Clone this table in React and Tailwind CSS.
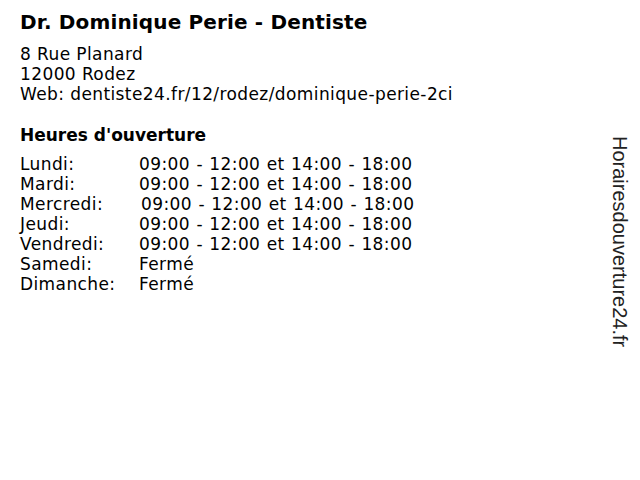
import React from 'react';

const hours = [
  { day: 'Lundi:', time: '09:00 - 12:00 et 14:00 - 18:00' },
  { day: 'Mardi:', time: '09:00 - 12:00 et 14:00 - 18:00' },
  { day: 'Mercredi:', time: '09:00 - 12:00 et 14:00 - 18:00', shift: true },
  { day: 'Jeudi:', time: '09:00 - 12:00 et 14:00 - 18:00' },
  { day: 'Vendredi:', time: '09:00 - 12:00 et 14:00 - 18:00' },
  { day: 'Samedi:', time: 'Fermé' },
  { day: 'Dimanche:', time: 'Fermé' },
];

const App = () => {
  return (
    <div className="w-[640px] h-[480px] bg-white text-black flex font-['DejaVu_Sans',sans-serif] overflow-hidden">
      {/* Main info */}
      <div className="flex-grow pl-[20px] pt-[10px]">
        <h1 className="text-[20px] leading-[24px] font-bold tracking-[0.15px]">Dr. Dominique Perie - Dentiste</h1>

        <div className="mt-[10px] text-[17px] leading-[20px] tracking-[0.4px]">
          <p>8 Rue Planard</p>
          <p>12000 Rodez</p>
          <p>Web: dentiste24.fr/12/rodez/dominique-perie-2ci</p>
        </div>

        <h2 className="mt-[21px] text-[17px] leading-[20px] font-bold">Heures d'ouverture</h2>

        <div className="mt-[9px] text-[17px] leading-[20px] tracking-[0.4px]">
          {hours.map((h) => (
            <div key={h.day} className="flex">
              <span className="w-[119px] shrink-0">{h.day}</span>
              <span className={`[word-spacing:0.6px] ${h.shift ? 'ml-[2px]' : ''}`}>{h.time}</span>
            </div>
          ))}
        </div>
      </div>

      {/* Vertical brand */}
      <div className="w-[40px] shrink-0 flex justify-center pt-[136px]">
        <span className="[writing-mode:vertical-rl] text-[20px] leading-[20px] text-[#222] font-['Liberation_Sans',sans-serif]">
          Horairesdouverture24.fr
        </span>
      </div>
    </div>
  );
};

export default App;
